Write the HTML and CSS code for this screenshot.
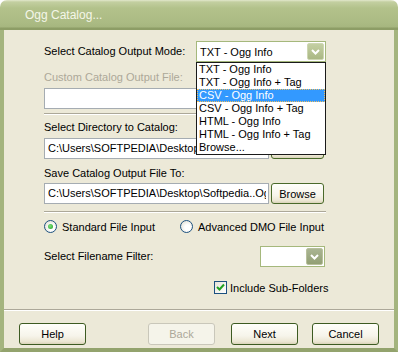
FILE: index.html
```html
<!DOCTYPE html>
<html lang="en">

<head>
    <meta charset="UTF-8">
    <title>Ogg Catalog...</title>
    <link rel="stylesheet" href="styles.css">
</head>

<body>
    <div class="window">
        <div class="titlebar">Ogg Catalog...</div>

        <div class="client">
            <div class="form">
                <div class="row row-mode">
                    <span class="label label-mode">Select Catalog Output Mode:</span>
                    <div class="combo combo-mode">
                        <span class="combo-text">TXT - Ogg Info</span>
                        <span class="combo-btn">
                            <svg width="9" height="6" viewBox="0 0 9 6"><path d="M1 1 L4.5 4.5 L8 1" fill="none" stroke="#fff" stroke-width="2"/></svg>
                        </span>
                        <ul class="dropdown">
                            <li>TXT - Ogg Info</li>
                            <li>TXT - Ogg Info + Tag</li>
                            <li class="selected">CSV - Ogg Info</li>
                            <li>CSV - Ogg Info + Tag</li>
                            <li>HTML - Ogg Info</li>
                            <li>HTML - Ogg Info + Tag</li>
                            <li>Browse...</li>
                        </ul>
                    </div>
                </div>

                <div class="label disabled gap-9">Custom Catalog Output File:</div>
                <div class="row row-input gap-4">
                    <div class="textbox"></div>
                    <button class="btn btn-browse" disabled>Browse</button>
                </div>

                <div class="sep gap-4"></div>

                <div class="label gap-6">Select Directory to Catalog:</div>
                <div class="row row-input gap-4">
                    <div class="textbox">C:\Users\SOFTPEDIA\Desktop</div>
                    <button class="btn btn-browse">Browse</button>
                </div>

                <div class="label gap-8">Save Catalog Output File To:</div>
                <div class="row row-input gap-3">
                    <div class="textbox"><span class="clip">C:\Users\SOFTPEDIA\Desktop\Softpedia..Ogg</span></div>
                    <button class="btn btn-browse">Browse</button>
                </div>

                <div class="sep gap-7"></div>

                <div class="row row-radio gap-7">
                    <div class="radio-item radio-first">
                        <span class="radio checked"></span>
                        <span class="radio-text">Standard File Input</span>
                    </div>
                    <div class="radio-item">
                        <span class="radio"></span>
                        <span class="radio-text">Advanced DMO File Input</span>
                    </div>
                </div>

                <div class="row row-filter gap-13">
                    <span class="label label-filter">Select Filename Filter:</span>
                    <div class="combo combo-filter">
                        <span class="combo-text"></span>
                        <span class="combo-btn dull">
                            <svg width="9" height="6" viewBox="0 0 9 6"><path d="M1 1 L4.5 4.5 L8 1" fill="none" stroke="#fff" stroke-width="2"/></svg>
                        </span>
                    </div>
                </div>

                <div class="row row-check gap-14">
                    <span class="checkbox">
                        <svg width="11" height="11" viewBox="0 0 11 11"><path d="M2 5 L4.5 7.5 L9 2.5" fill="none" stroke="#21a121" stroke-width="2"/></svg>
                    </span>
                    <span class="check-text">Include Sub-Folders</span>
                </div>
            </div>

            <div class="sep sep-full"></div>

            <div class="buttons">
                <button class="btn btn-help">Help</button>
                <button class="btn btn-back" disabled>Back</button>
                <button class="btn btn-next">Next</button>
                <button class="btn btn-cancel">Cancel</button>
            </div>
        </div>
    </div>
</body>

</html>
```

FILE: styles.css
```css
* {
    box-sizing: border-box;
    margin: 0;
    padding: 0;
}

body {
    background: #fff;
    font-family: 'Liberation Sans', Arial, sans-serif;
    font-size: 11px;
    color: #000;
}

.window {
    width: 398px;
    height: 352px;
    display: flex;
    flex-direction: column;
}

/* Title bar */
.titlebar {
    height: 30px;
    padding-left: 25px;
    line-height: 30px;
    font-size: 12px;
    color: #f4f6e8;
    border-radius: 7px 7px 0 0;
    background: linear-gradient(to bottom, #e2e8cc 0, #c3cfa0 2px, #b3c28b 8px, #abbb84 22px, #a6b67f 27px, #8d9d66 28px, #8d9d66 30px);
}

.client {
    flex: 1;
    background: #ece9d8;
    border-left: 4px solid #a4b47e;
    border-right: 4px solid #a4b47e;
    border-bottom: 4px solid #93a36d;
}

.form {
    padding: 11px 0 0 40px;
}

.row {
    display: flex;
    align-items: center;
}

.label {
    display: block;
    height: 13px;
    line-height: 13px;
    white-space: nowrap;
}

.label-mode {
    width: 152px;
}

.label-filter {
    width: 216px;
}

.disabled {
    color: #aca899;
}

.gap-3 { margin-top: 3px; }
.gap-4 { margin-top: 4px; }
.gap-6 { margin-top: 6px; }
.gap-7 { margin-top: 7px; }
.gap-8 { margin-top: 8px; }
.gap-9 { margin-top: 9px; }
.gap-13 { margin-top: 13px; }
.gap-14 { margin-top: 14px; }

/* Combo boxes */
.combo {
    position: relative;
    height: 21px;
    background: #fff;
    border: 1px solid #a5b87c;
    display: flex;
    align-items: center;
}

.combo-mode {
    width: 130px;
}

.combo-filter {
    width: 65px;
}

.combo-text {
    flex: 1;
    padding-left: 3px;
    white-space: nowrap;
}

.combo-btn {
    width: 17px;
    height: 17px;
    margin-right: 1px;
    border: 1px solid #cdd6b2;
    border-radius: 2px;
    background: linear-gradient(to bottom, #c4cfa3, #aab884);
    display: flex;
    align-items: center;
    justify-content: center;
}

.combo-btn.dull {
    border-color: #b8c09c;
    background: linear-gradient(to bottom, #aab593, #929f74);
}

.dropdown {
    position: absolute;
    top: 20px;
    left: -1px;
    width: 130px;
    height: 93px;
    background: #fff;
    border: 1px solid #1a1a1a;
    list-style: none;
    z-index: 2;
}

.dropdown li {
    height: 13px;
    line-height: 13px;
    padding-left: 2px;
    white-space: nowrap;
}

.dropdown li.selected {
    background: #3399ff;
    color: #fff;
    outline: 1px dotted #f0c060;
    outline-offset: -1px;
}

/* Text inputs */
.textbox {
    width: 225px;
    height: 21px;
    line-height: 19px;
    padding-left: 3px;
    background: #fff;
    border: 1px solid #a5acb2;
    white-space: nowrap;
    overflow: hidden;
}

.clip {
    display: inline-block;
    max-width: 218px;
    overflow: hidden;
    vertical-align: top;
}

/* Separators */
.sep {
    width: 282px;
    height: 2px;
    border-top: 1px solid #aca899;
    border-bottom: 1px solid #fff;
}

.sep-full {
    width: 100%;
    margin-top: 15px;
}

/* Buttons */
.btn {
    font-family: inherit;
    font-size: 11px;
    color: #000;
    height: 22px;
    width: 67px;
    border: 1px solid #3d5b22;
    border-radius: 3px;
    background: linear-gradient(to bottom, #fffffb 0, #f6f4ea 60%, #ebe6d2 88%, #d9d3b9 100%);
}

.btn:disabled {
    color: #aca899;
    border-color: #c9c7ba;
    background: #f5f4ea;
}

.btn-browse {
    width: 53px;
    height: 21px;
    margin-left: 2px;
    border-color: #4a6a2a;
}

.buttons {
    display: flex;
    margin-top: 12px;
    padding-left: 15px;
}

.btn-back { margin-left: 62px; }
.btn-next { margin-left: 16px; }
.btn-cancel { margin-left: 14px; }

/* Radio buttons */
.row-radio {
    height: 13px;
}

.radio-item {
    display: flex;
    align-items: center;
}

.radio-first {
    width: 136px;
}

.radio {
    width: 13px;
    height: 13px;
    border: 1px solid #1c5180;
    border-radius: 50%;
    background: radial-gradient(circle at 60% 60%, #fff 30%, #d8d6c8 100%);
    display: flex;
    align-items: center;
    justify-content: center;
}

.radio.checked::after {
    content: "";
    width: 5px;
    height: 5px;
    border-radius: 50%;
    background: radial-gradient(circle at 40% 40%, #7ee07e, #21a121);
}

.radio-text {
    margin-left: 5px;
    white-space: nowrap;
}

/* Filter row */
.row-filter {
    height: 21px;
}

/* Checkbox */
.row-check {
    height: 13px;
    padding-left: 170px;
}

.checkbox {
    width: 13px;
    height: 13px;
    border: 1px solid #1c5180;
    background: linear-gradient(to bottom right, #e6e4da, #fff);
    display: flex;
    align-items: center;
    justify-content: center;
}

.check-text {
    margin-left: 3px;
    white-space: nowrap;
}
```
